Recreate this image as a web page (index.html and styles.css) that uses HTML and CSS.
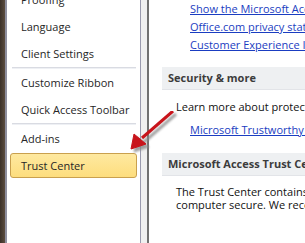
FILE: index.html
```html
<!DOCTYPE html>
<html lang="en">
<head>
    <meta charset="UTF-8">
    <title>Access Options - Trust Center</title>
    <link rel="stylesheet" href="styles.css">
</head>
<body>
    <div class="window">
        <div class="frame-edge"></div>
        <div class="nav">
            <div class="nav-list">
                <div class="nav-item">Proofing</div>
                <div class="nav-item">Language</div>
                <div class="nav-item">Client Settings</div>
                <div class="nav-sep"></div>
                <div class="nav-item">Customize Ribbon</div>
                <div class="nav-item">Quick Access Toolbar</div>
                <div class="nav-sep"></div>
                <div class="nav-item">Add-ins</div>
                <div class="nav-item active">Trust Center</div>
            </div>
        </div>
        <div class="divider"></div>
        <div class="content">
            <div class="links">
                <a href="#">Show the Microsoft Access privacy statement</a>
                <a href="#">Office.com privacy statement</a>
                <a href="#">Customer Experience Improvement Program</a>
            </div>
            <div class="section-head">Security &amp; more</div>
            <p class="text">Learn more about protecting your privacy and security from Office.com.</p>
            <div class="links">
                <a href="#">Microsoft Trustworthy Computing</a>
            </div>
            <div class="section-head second">Microsoft Access Trust Center</div>
            <p class="text">The Trust Center contains security and privacy settings.<br>computer secure. We recommend that you do not change</p>
        </div>

        <!-- callout arrow drawn over the screenshot -->
        <svg class="arrow" width="60" height="50" viewBox="0 0 60 50">
            <defs>
                <filter id="blur" x="-20%" y="-20%" width="140%" height="140%">
                    <feGaussianBlur stdDeviation="1.2"/>
                </filter>
            </defs>
            <g filter="url(#blur)" fill="#8a8a8a" stroke="#8a8a8a" opacity="0.8">
                <line x1="46" y1="3" x2="14" y2="31" stroke-width="3"/>
                <polygon points="4,41 7,26 19,36"/>
            </g>
            <g fill="#c8141b" stroke="#c8141b">
                <line x1="43" y1="0" x2="12" y2="27" stroke-width="3"/>
                <polygon points="1,38 4,23 16,33"/>
            </g>
        </svg>
    </div>
</body>
</html>
```

FILE: styles.css
```css
html, body {
    margin: 0;
    padding: 0;
}
body {
    font-family: "Open Sans", "Noto Sans", sans-serif;
    font-size: 11px;
    color: #1e1e1e;
    background-color: #ffffff;
}
.window {
    position: relative;
    display: flex;
    width: 305px;
    height: 243px;
    overflow: hidden;
}
.frame-edge {
    width: 5px;
    flex: none;
    background: linear-gradient(to right, #3b3128, #5a4c3e);
    border-right: 2px solid #8e8f9e;
}
.nav {
    width: 133px;
    flex: none;
    overflow: hidden;
}
.nav-list {
    margin-top: -14px;
}
.nav-item {
    height: 27px;
    line-height: 27px;
    padding-left: 14px;
    color: #262626;
    white-space: nowrap;
}
.nav-item.active {
    height: 23px;
    line-height: 23px;
    margin: 1px 3px 0 3px;
    padding-left: 10px;
    background: linear-gradient(to bottom, #fee9a0, #fddd7e);
    border: 1px solid #c9a04e;
    border-radius: 3px;
}
.nav-sep {
    height: 1px;
    margin: 0 4px 0 5px;
    background-color: #d9dbe2;
    border-bottom: 1px solid #eef0f4;
}
.divider {
    width: 6px;
    flex: none;
    background-color: #f0f0f0;
    border-left: 1px solid #9a9aae;
    border-right: 2px solid #717171;
}
.content {
    flex: 1;
    min-width: 0;
    padding-left: 13px;
    overflow: hidden;
    white-space: nowrap;
}
.links {
    padding-left: 28px;
}
.links a {
    display: block;
    height: 18px;
    line-height: 18px;
    color: #1a3dc1;
    text-decoration: underline;
}
.section-head {
    height: 22px;
    line-height: 22px;
    margin-top: 13px;
    padding-left: 6px;
    background-color: #eef0f2;
    border-bottom: 1px solid #e2e4e8;
    font-weight: bold;
    color: #3c3c3c;
}
.section-head.second {
    margin-top: 14px;
}
.text {
    margin: 10px 0 8px 14px;
    line-height: 13px;
    color: #111111;
}
.section-head.second + .text {
    margin-top: 9px;
}
.arrow {
    position: absolute;
    left: 130px;
    top: 111px;
}
```
